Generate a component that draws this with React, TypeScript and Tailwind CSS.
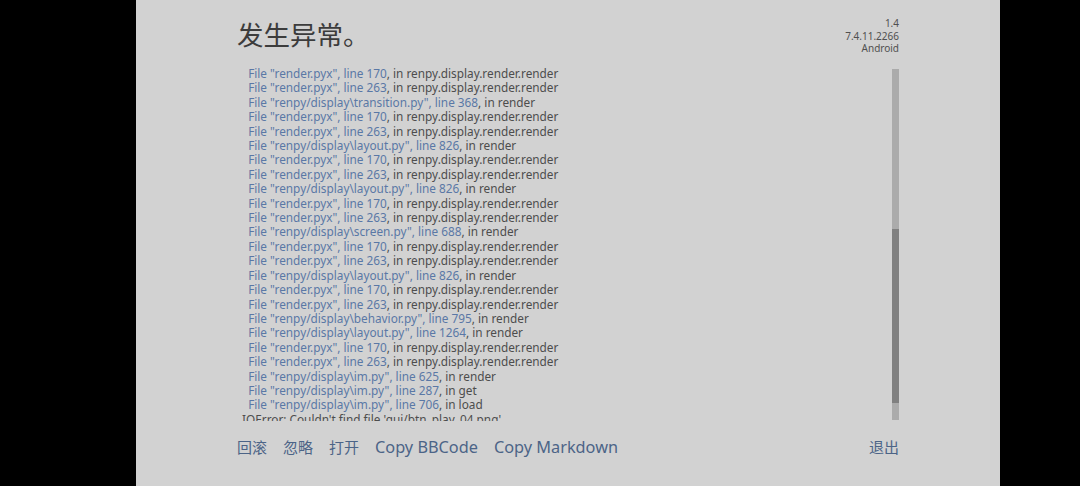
import React from 'react';

type Frame = { file: string; line: number; fn: string };

const R170: Frame = { file: 'render.pyx', line: 170, fn: 'renpy.display.render.render' };
const R263: Frame = { file: 'render.pyx', line: 263, fn: 'renpy.display.render.render' };
const LAYOUT: Frame = { file: 'renpy/display\\layout.py', line: 826, fn: 'render' };

const FRAMES: Frame[] = [
  R170,
  R263,
  { file: 'renpy/display\\transition.py', line: 368, fn: 'render' },
  R170,
  R263,
  LAYOUT,
  R170,
  R263,
  LAYOUT,
  R170,
  R263,
  { file: 'renpy/display\\screen.py', line: 688, fn: 'render' },
  R170,
  R263,
  LAYOUT,
  R170,
  R263,
  { file: 'renpy/display\\behavior.py', line: 795, fn: 'render' },
  { file: 'renpy/display\\layout.py', line: 1264, fn: 'render' },
  R170,
  R263,
  { file: 'renpy/display\\im.py', line: 625, fn: 'render' },
  { file: 'renpy/display\\im.py', line: 287, fn: 'get' },
  { file: 'renpy/display\\im.py', line: 706, fn: 'load' },
];

const FONT = "font-['Noto_Sans','Noto_Sans_CJK_SC',sans-serif]";

const App: React.FC = () => {
  return (
    <div className={`flex w-[1080px] h-[486px] bg-black overflow-hidden ${FONT}`}>
      <div className="w-[136px] shrink-0" />
      <div className="w-[864px] shrink-0 bg-[#d2d2d2] flex flex-col px-[101px]">
        {/* Header */}
        <div className="flex justify-between h-[67px]">
          <h1 className="text-[26.5px] leading-none text-[#3c3c3c] mt-[22px]">发生异常。</h1>
          <div className="text-right text-[10px] leading-[12.7px] text-[#505050] mt-[17px]">
            <div>1.4</div>
            <div>7.4.11.2266</div>
            <div>Android</div>
          </div>
        </div>

        {/* Traceback */}
        <div className="flex h-[354px]">
          <div className="flex-1 overflow-hidden pl-[5px]">
            <div className="-mt-[1px] text-[11.8px] leading-[14.4px] text-[#4d4d4d] whitespace-pre">
              {FRAMES.map((f, i) => (
                <div key={i}>
                  {'  '}
                  <span className="text-[#5a78a6]">
                    File "{f.file}", line {f.line}
                  </span>
                  , in {f.fn}
                </div>
              ))}
              <div>IOError: Couldn't find file 'gui/btn_play_04.png'.</div>
            </div>
          </div>
          <div className="w-[7px] mt-[2px] mb-[1px] bg-[#ababab] flex flex-col">
            <div className="h-[160px]" />
            <div className="h-[174px] bg-[#808080]" />
          </div>
        </div>

        {/* Buttons */}
        <div className="flex items-center justify-between mt-[18px] text-[16.3px] leading-none text-[#4c6487]">
          <div className="flex items-center gap-[16px]">
            <span className="text-[15px]">回滚</span>
            <span className="text-[15px]">忽略</span>
            <span className="text-[15px]">打开</span>
            <span>Copy BBCode</span>
            <span>Copy Markdown</span>
          </div>
          <span className="text-[15px]">退出</span>
        </div>
      </div>
      <div className="flex-1" />
    </div>
  );
};

export default App;
